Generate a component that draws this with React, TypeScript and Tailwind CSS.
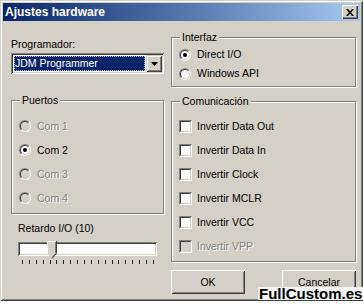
import React from 'react';

function Radio({ checked, disabled }: { checked?: boolean; disabled?: boolean }) {
  return (
    <span className="flex w-[12px] h-[12px] shrink-0 rounded-full border border-t-[#808080] border-l-[#808080] border-b-white border-r-white">
      <span
        className={`flex items-center justify-center w-full h-full rounded-full border border-t-[#404040] border-l-[#404040] border-b-[#d4d0c8] border-r-[#d4d0c8] ${
          disabled ? 'bg-[#d4d0c8]' : 'bg-white'
        }`}
      >
        {checked && <span className="w-[4px] h-[4px] rounded-full bg-black" />}
      </span>
    </span>
  );
}

function Checkbox({ disabled }: { disabled?: boolean }) {
  return (
    <span className="flex w-[13px] h-[13px] shrink-0 border border-t-[#808080] border-l-[#808080] border-b-white border-r-white">
      <span
        className={`w-full h-full border border-t-[#404040] border-l-[#404040] border-b-[#d4d0c8] border-r-[#d4d0c8] ${
          disabled ? 'bg-[#d4d0c8]' : 'bg-white'
        }`}
      />
    </span>
  );
}

function Group({ title, className, children }: { title: string; className: string; children: React.ReactNode }) {
  return (
    <div className={`border border-[#808080] shadow-[inset_1px_1px_#fff,1px_1px_#fff] ${className}`}>
      <div className="-mt-[7px] ml-[8px] px-[2px] w-fit bg-[#d4d0c8] leading-[12px]">{title}</div>
      {children}
    </div>
  );
}

const disabledText = 'text-[#808080] [text-shadow:1px_1px_0_#fff]';

function Button({ children }: { children: React.ReactNode }) {
  return (
    <div className="flex items-center justify-center w-[75px] h-[24px] leading-[12px] bg-[#d4d0c8] shadow-[inset_1px_1px_#fff,inset_-1px_-1px_#404040,inset_2px_2px_#d4d0c8,inset_-2px_-2px_#808080]">
      {children}
    </div>
  );
}

export default function App() {
  const ports = [
    { label: 'Com 1', disabled: true },
    { label: 'Com 2', checked: true },
    { label: 'Com 3', disabled: true },
    { label: 'Com 4', disabled: true },
  ];
  const options = [
    'Invertir Data Out',
    'Invertir Data In',
    'Invertir Clock',
    'Invertir MCLR',
    'Invertir VCC',
  ];

  return (
    <div className="relative w-[363px] h-[304px] bg-white text-[10.5px] text-black font-['Liberation_Sans',Arial,sans-serif] overflow-hidden">
      {/* Window */}
      <div className="h-[301px] bg-[#d4d0c8] p-[3px] shadow-[inset_1px_1px_#d4d0c8,inset_-1px_-1px_#404040,inset_2px_2px_#fff,inset_-2px_-2px_#808080]">
        {/* Title bar */}
        <div className="flex items-center justify-between h-[18px] pl-[2px] pr-[2px] bg-gradient-to-r from-[#0a246a] to-[#a6caf0]">
          <span className="text-white font-bold text-[12px] leading-[18px]">Ajustes hardware</span>
          <div className="flex items-center justify-center w-[16px] h-[14px] bg-[#d4d0c8] shadow-[inset_1px_1px_#fff,inset_-1px_-1px_#404040,inset_-2px_-2px_#808080]">
            <svg width="8" height="7" viewBox="0 0 8 7">
              <path d="M0 0h2l2 2.2L6 0h2L5 3.5 8 7H6L4 4.8 2 7H0l3-3.5z" fill="#000" />
            </svg>
          </div>
        </div>

        {/* Body */}
        <div className="flex gap-[7px] pl-[8px]">
          {/* Left column */}
          <div className="flex flex-col w-[153px]">
            <div className="mt-[17px] leading-[13px]">Programador:</div>
            <div className="mt-[2px] h-[21px] flex p-[2px] bg-white shadow-[inset_1px_1px_#808080,inset_-1px_-1px_#fff,inset_2px_2px_#404040,inset_-2px_-2px_#d4d0c8]">
              <div className="flex-1 m-[1px] flex items-center bg-[#0a246a] border border-dotted border-[#b8c4e8] text-white leading-[13px]">
                JDM Programmer
              </div>
              <div className="w-[16px] flex items-center justify-center bg-[#d4d0c8] shadow-[inset_1px_1px_#d4d0c8,inset_-1px_-1px_#404040,inset_2px_2px_#fff,inset_-2px_-2px_#808080]">
                <svg width="7" height="4" viewBox="0 0 7 4">
                  <path d="M0 0h7L3.5 4z" fill="#000" />
                </svg>
              </div>
            </div>

            <Group title="Puertos" className="mt-[26px] h-[114px]">
              <div className="flex flex-col pt-[8px] pl-[7px]">
                {ports.map((p) => (
                  <div key={p.label} className="flex items-center gap-[6px] h-[24px]">
                    <Radio checked={p.checked} disabled={p.disabled} />
                    <span className={`leading-[13px] ${p.disabled ? disabledText : ''}`}>{p.label}</span>
                  </div>
                ))}
              </div>
            </Group>

            <div className="mt-[8px] ml-[7px] leading-[13px]">Retardo I/O (10)</div>
            <div className="relative mt-[7px] ml-[7px] w-[139px] h-[14px] bg-white shadow-[inset_1px_1px_#808080,inset_-1px_-1px_#fff,inset_2px_2px_#404040,inset_-2px_-2px_#d4d0c8]">
              <svg className="absolute left-[29px] -top-[1px]" width="10" height="18" viewBox="0 0 10 18">
                <path d="M0.5 0.5h9v12l-4.5 5-4.5-5z" fill="#d4d0c8" />
                <path d="M0.5 12.5v-12h8" stroke="#fff" fill="none" />
                <path d="M9.5 0v12.5l-4.5 5" stroke="#404040" fill="none" />
                <path d="M8.5 1v11.3l-3.5 3.9" stroke="#808080" fill="none" />
              </svg>
            </div>
            <div className="mt-[4px] ml-[11px] w-[132px] h-[4px] flex justify-between">
              {Array.from({ length: 20 }).map((_, i) => (
                <span key={i} className="w-[1px] h-[4px] bg-[#202020]" />
              ))}
            </div>
          </div>

          {/* Right column */}
          <div className="flex flex-col w-[185px]">
            <Group title="Interfaz" className="mt-[16px] h-[50px]">
              <div className="flex flex-col pt-[2px] pl-[7px]">
                <div className="flex items-center gap-[6px] h-[19px]">
                  <Radio checked />
                  <span className="leading-[13px]">Direct I/O</span>
                </div>
                <div className="flex items-center gap-[6px] h-[19px]">
                  <Radio />
                  <span className="leading-[13px]">Windows API</span>
                </div>
              </div>
            </Group>

            <Group title="Comunicación" className="mt-[14px] h-[161px]">
              <div className="flex flex-col pt-[7px] pl-[7px]">
                {options.map((o) => (
                  <div key={o} className="flex items-center gap-[5px] h-[24px]">
                    <Checkbox />
                    <span className="leading-[13px]">{o}</span>
                  </div>
                ))}
                <div className="flex items-center gap-[5px] h-[24px]">
                  <Checkbox disabled />
                  <span className={`leading-[13px] ${disabledText}`}>Invertir VPP</span>
                </div>
              </div>
            </Group>

            <div className="mt-[8px] flex gap-[37px]">
              <Button>OK</Button>
              <Button>
                <span className="-mt-[1px]">
                  <span className="underline">C</span>ancelar
                </span>
              </Button>
            </div>
          </div>
        </div>
      </div>

      {/* Watermark */}
      <span className="absolute left-[258px] top-[287px] px-[1px] bg-[#f4f4f2] text-[15px] leading-[13px] font-bold text-black">
        FullCustom.es
      </span>
    </div>
  );
}
